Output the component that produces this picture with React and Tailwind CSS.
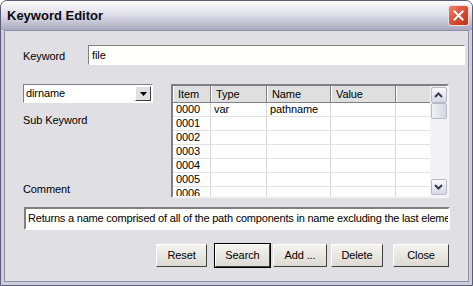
const rows = [
  { item: "0000", type: "var", name: "pathname" },
  { item: "0001" },
  { item: "0002" },
  { item: "0003" },
  { item: "0004" },
  { item: "0005" },
  { item: "0006" },
];

const cols = [
  { key: "item", label: "Item", w: "w-[38px]" },
  { key: "type", label: "Type", w: "w-[56px]" },
  { key: "name", label: "Name", w: "w-[64px]" },
  { key: "value", label: "Value", w: "w-[65px]" },
  { key: "blank", label: "", w: "w-[36px]" },
];

const sunken =
  "border-t border-l border-t-[#808080] border-l-[#808080] border-b border-r border-b-white border-r-white";

const XpButton = ({ children, w, isDefault }) => (
  <button
    className={`h-[25px] ${w} ${
      isDefault ? "border border-black" : "border border-transparent"
    }`}
  >
    <div className="h-full w-full border border-t-white border-l-white border-b-[#404040] border-r-[#404040] bg-[#ece9d8] bg-linear-to-b from-[#f4f3ee] to-[#dcdad2] flex items-center justify-center">
      {children}
    </div>
  </button>
);

const ScrollBtn = ({ up }) => (
  <div className="h-[16px] w-[16px] rounded-[2px] border border-[#b8b8c8] bg-linear-to-b from-[#fafafc] to-[#d8d8e4] flex items-center justify-center">
    <svg width="9" height="6" viewBox="0 0 9 6">
      <path
        d={up ? "M1 5 L4.5 1.5 L8 5" : "M1 1 L4.5 4.5 L8 1"}
        fill="none"
        stroke="#3a3a50"
        strokeWidth="2"
      />
    </svg>
  </div>
);

export default function App() {
  return (
    <div className="w-[473px] h-[286px] bg-white font-['Liberation_Sans',sans-serif] text-[11px] tracking-[-0.1px] text-black overflow-hidden">
      <div className="w-full h-full flex flex-col rounded-t-[7px] border border-[#5c5c78] bg-[#cfcfdc] overflow-hidden">
        {/* TITLE BAR */}
        <div className="h-[29px] shrink-0 flex items-center justify-between pl-[6px] pr-[3px] bg-linear-to-b from-[#fdfdfe] via-[#dcdce6] to-[#a9a9bf]">
          <span className="text-[13px] font-bold tracking-normal text-[#0a0a14] leading-none">
            Keyword Editor
          </span>
          <div className="h-[21px] w-[21px] rounded-[3px] border border-[#f0e0dc] bg-linear-to-br from-[#f08068] via-[#dc4e36] to-[#bb3018] flex items-center justify-center">
            <svg width="11" height="11" viewBox="0 0 11 11">
              <path
                d="M1.5 1.5 L9.5 9.5 M9.5 1.5 L1.5 9.5"
                stroke="white"
                strokeWidth="2"
                strokeLinecap="square"
              />
            </svg>
          </div>
        </div>

        {/* CLIENT */}
        <div className="flex-1 mx-[3px] mb-[3px] border border-[#8c8ca4] bg-[#e0dfe3] flex flex-col">
          {/* KEYWORD */}
          <div className="mt-[14px] flex items-center pl-[18px] pr-[3px]">
            <span className="w-[65px] pt-[3px]">Keyword</span>
            <div className={`flex-1 h-[20px] bg-[#fffffb] ${sunken} flex items-center pl-[3px]`}>
              file
            </div>
          </div>

          {/* MIDDLE */}
          <div className="mt-[19px] flex pl-[18px] h-[114px]">
            <div className="w-[148px] flex flex-col">
              <div className={`w-[130px] h-[19px] bg-white ${sunken} flex items-center pl-[2px]`}>
                <span className="flex-1">dirname</span>
                <div className="w-[16px] h-[15px] mr-[1px] bg-[#e0dfe3] border border-t-white border-l-white border-b-[#404040] border-r-[#404040] flex items-center justify-center">
                  <svg width="7" height="4" viewBox="0 0 7 4">
                    <path d="M0 0 H7 L3.5 4 Z" fill="black" />
                  </svg>
                </div>
              </div>
              <span className="mt-[9px]">Sub Keyword</span>
              <span className="mt-auto pb-[1px]">Comment</span>
            </div>

            <div className="w-[278px] border-2 border-t-[#808080] border-l-[#808080] border-b-[#f4f4f4] border-r-[#f4f4f4] bg-white flex overflow-hidden">
              <div className="flex-1 flex flex-col overflow-hidden">
                <div className="h-[17px] shrink-0 flex bg-[#dfdfdf] border-b border-[#808080]">
                  {cols.map((c) => (
                    <div
                      key={c.key}
                      className={`${c.w} shrink-0 border-r border-[#808080] border-l border-l-white pl-[4px] flex items-center`}
                    >
                      {c.label}
                    </div>
                  ))}
                </div>
                {rows.map((r) => (
                  <div key={r.item} className="h-[14px] shrink-0 flex border-b border-[#e2e2e2]">
                    {cols.map((c) => (
                      <div
                        key={c.key}
                        className={`${c.w} shrink-0 border-r border-[#d8d8d8] pl-[3px] flex items-center leading-none`}
                      >
                        {r[c.key] || ""}
                      </div>
                    ))}
                  </div>
                ))}
              </div>
              <div className="w-[17px] shrink-0 bg-[#f3f3f6] flex flex-col items-center pt-[1px] pb-[1px]">
                <ScrollBtn up />
                <div className="h-[16px] w-[16px] rounded-[2px] border border-[#b8b8c8] bg-linear-to-r from-[#f0f0f6] to-[#d6d6e2]" />
                <div className="flex-1" />
                <ScrollBtn />
              </div>
            </div>
          </div>

          {/* COMMENT */}
          <div className="mt-[9px] pl-[19px]">
            <div className="w-[426px] h-[23px] bg-[#fffffb] border-2 border-t-[#808080] border-l-[#808080] border-b-white border-r-white flex items-center pl-[2px] whitespace-nowrap overflow-hidden tracking-[-0.2px]">
              Returns a name comprised of all of the path components in name excluding the last element
            </div>
          </div>

          {/* BUTTONS */}
          <div className="mt-[13px] flex pl-[150px]">
            <XpButton w="w-[53px]">Reset</XpButton>
            <div className="w-[6px]" />
            <XpButton w="w-[57px]" isDefault>
              Search
            </XpButton>
            <div className="w-[1px]" />
            <XpButton w="w-[56px]">Add ...</XpButton>
            <div className="w-[2px]" />
            <XpButton w="w-[54px]">Delete</XpButton>
            <div className="w-[8px]" />
            <XpButton w="w-[58px]">Close</XpButton>
          </div>
        </div>
      </div>
    </div>
  );
}
